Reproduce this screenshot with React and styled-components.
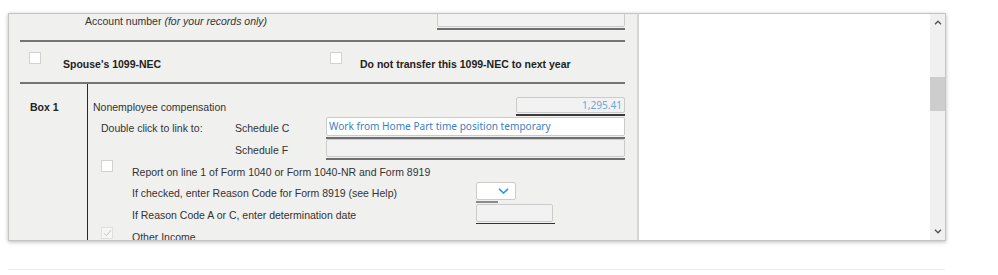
import React from 'react';
import styled, { createGlobalStyle } from 'styled-components';

const GlobalStyle = createGlobalStyle`
  html, body {
    margin: 0;
    padding: 0;
    background: #ffffff;
  }
  body {
    font-family: "Liberation Sans", Arial, sans-serif;
    font-size: 10.5px;
    color: #333333;
  }
`;

const Page = styled.div`
  padding: 13px 0 0 8px;
  width: 938px;
`;

const Window = styled.div`
  box-sizing: border-box;
  width: 938px;
  height: 228px;
  border: 1px solid #c4c4c4;
  box-shadow: 0 1px 4px rgba(0, 0, 0, 0.28);
  display: flex;
  background: #ffffff;
`;

const FormPane = styled.div`
  width: 628px;
  flex-shrink: 0;
  background: #f0f0ef;
  overflow: hidden;
`;

const FormContent = styled.div`
  margin-top: -6px;
  padding: 0 12px 0 11px;
`;

const Divider = styled.div`
  width: 2px;
  flex-shrink: 0;
  background: #d6d6d6;
`;

const SidePane = styled.div`
  flex: 1;
  background: #ffffff;
`;

const Scrollbar = styled.div`
  width: 15px;
  flex-shrink: 0;
  background: #f0f0f0;
  display: flex;
  flex-direction: column;
`;

const ArrowButton = styled.div`
  height: 17px;
  display: flex;
  align-items: center;
  justify-content: center;
`;

const Track = styled.div`
  flex: 1;
`;

const Thumb = styled.div`
  margin-top: 46px;
  height: 34px;
  background: #cdcdcd;
`;

const BottomRule = styled.div`
  margin-top: 28px;
  height: 1px;
  width: 937px;
  background: #ececec;
`;

/* form parts */

const Rule = styled.div`
  height: 2px;
  background: #747474;
`;

const AccountRow = styled.div`
  height: 32px;
  display: flex;
  align-items: flex-start;
`;

const Label = styled.div`
  line-height: 14px;
  padding-top: ${(p) => p.$top || 0}px;
  margin-left: ${(p) => p.$left || 0}px;
  white-space: nowrap;
  font-weight: ${(p) => (p.$bold ? 'bold' : 'normal')};
  color: ${(p) => (p.$bold ? '#222' : '#333')};
`;

const FieldGroup = styled.div`
  width: ${(p) => p.$width}px;
  margin-left: ${(p) => (p.$auto ? 'auto' : '0')};
  margin-top: ${(p) => p.$top || 0}px;
  display: flex;
  flex-direction: column;
  gap: 1px;
  flex-shrink: 0;
`;

const Input = styled.div`
  box-sizing: border-box;
  height: ${(p) => p.$height || 18}px;
  width: ${(p) => (p.$width ? `${p.$width}px` : '100%')};
  border: 1px solid #cbcbcb;
  border-radius: 2px;
  background: ${(p) => (p.$white ? '#ffffff' : '#f2f2f2')};
  font-family: "Noto Sans", "Open Sans", sans-serif;
  font-size: 10.1px;
  line-height: ${(p) => (p.$height || 18) - 2}px;
  color: ${(p) => p.$color || '#3b7fbf'};
  text-align: ${(p) => (p.$right ? 'right' : 'left')};
  padding: 0 2px;
  white-space: nowrap;
  overflow: hidden;
`;

const Underline = styled.div`
  height: ${(p) => p.$thick || 2}px;
  width: ${(p) => (p.$width ? `${p.$width}px` : '100%')};
  background: ${(p) => p.$color || '#6e6e6e'};
`;

const OptionsRow = styled.div`
  height: 40px;
  display: flex;
`;

const Option = styled.div`
  box-sizing: border-box;
  display: flex;
  align-items: flex-start;
  width: ${(p) => (p.$width ? `${p.$width}px` : 'auto')};
  padding-left: ${(p) => p.$pad || 0}px;
  flex-shrink: 0;
`;

const Checkbox = styled.div`
  box-sizing: border-box;
  width: 12px;
  height: 12px;
  margin-top: ${(p) => p.$top || 0}px;
  flex-shrink: 0;
  background: ${(p) => (p.$disabled ? '#f6f6f6' : '#ffffff')};
  border: 1px solid ${(p) => (p.$disabled ? '#e0e0e0' : '#d2d2d2')};
  display: flex;
  align-items: center;
  justify-content: center;
`;

const BoxSection = styled.div`
  display: grid;
  grid-template-columns: 67px 1fr;
`;

const BoxLabel = styled.div`
  padding: 16px 0 0 10px;
  line-height: 14px;
  font-weight: bold;
  color: #222;
`;

const BoxBody = styled.div`
  border-left: 1px solid #2a2a2a;
  padding-top: 13px;
  min-height: 200px;
`;

const CompRow = styled.div`
  display: flex;
  padding-left: 5px;
  margin-bottom: 1px;
`;

const LinkRow = styled.div`
  display: grid;
  grid-template-columns: 147px 91px 1fr;
`;

const CheckRow = styled.div`
  display: flex;
  align-items: flex-start;
  padding-left: 13px;
  height: ${(p) => p.$height}px;
`;

const FieldRow = styled.div`
  display: grid;
  grid-template-columns: 388px auto;
  height: ${(p) => p.$height}px;
`;

const Chevron = ({ up, color = '#505050' }) => (
  <svg width="8" height="5" viewBox="0 0 8 5">
    <path
      d={up ? 'M1 4.2 L4 1.2 L7 4.2' : 'M1 0.8 L4 3.8 L7 0.8'}
      fill="none"
      stroke={color}
      strokeWidth="1.3"
    />
  </svg>
);

const Select = styled.div`
  box-sizing: border-box;
  width: 40px;
  height: 18px;
  background: #ffffff;
  border: 1px solid #cbcbcb;
  border-radius: 2px;
  display: flex;
  align-items: center;
  justify-content: flex-end;
  padding-right: 6px;
`;

const App = () => {
  return (
    <>
      <GlobalStyle />
      <Page>
        <Window>
          <FormPane>
            <FormContent>
              <AccountRow>
                <Label $top={6} $left={65}>
                  Account number <i>(for your records only)</i>
                </Label>
                <FieldGroup $width={188} $auto>
                  <Input $height={19} />
                  <Underline />
                </FieldGroup>
              </AccountRow>
              <Rule />
              <OptionsRow>
                <Option $width={310} $pad={9}>
                  <Checkbox $top={10} />
                  <Label $bold $top={15} $left={22}>
                    Spouse's 1099-NEC
                  </Label>
                </Option>
                <Option>
                  <Checkbox $top={10} />
                  <Label $bold $top={15} $left={18}>
                    Do not transfer this 1099-NEC to next year
                  </Label>
                </Option>
              </OptionsRow>
              <Rule />
              <BoxSection>
                <BoxLabel>Box 1</BoxLabel>
                <BoxBody>
                  <CompRow>
                    <Label $top={3}>Nonemployee compensation</Label>
                    <FieldGroup $width={109} $auto>
                      <Input $height={16} $right $color="#6aa6d6">
                        1,295.41
                      </Input>
                      <Underline $color="#3a3a3a" />
                    </FieldGroup>
                  </CompRow>
                  <LinkRow>
                    <Label $top={4} $left={13}>
                      Double click to link to:
                    </Label>
                    <Label $top={4}>Schedule C</Label>
                    <FieldGroup $width={299}>
                      <Input $white $height={19}>
                        Work from Home Part time position temporary
                      </Input>
                      <Underline />
                    </FieldGroup>
                  </LinkRow>
                  <LinkRow>
                    <span />
                    <Label $top={4}>Schedule F</Label>
                    <FieldGroup $width={299}>
                      <Input $height={18} />
                      <Underline />
                    </FieldGroup>
                  </LinkRow>
                  <CheckRow $height={20}>
                    <Checkbox />
                    <Label $top={5} $left={19}>
                      Report on line 1 of Form 1040 or Form 1040-NR and Form 8919
                    </Label>
                  </CheckRow>
                  <FieldRow $height={23}>
                    <Label $top={6} $left={44}>
                      If checked, enter Reason Code for Form 8919 (see Help)
                    </Label>
                    <FieldGroup $width={40} $top={2}>
                      <Select>
                        <svg width="11" height="6" viewBox="0 0 11 6">
                          <path
                            d="M1 0.8 L5.5 5 L10 0.8"
                            fill="none"
                            stroke="#2a96f0"
                            strokeWidth="1.6"
                          />
                        </svg>
                      </Select>
                      <Underline $width={22} $color="#8a8a8a" />
                    </FieldGroup>
                  </FieldRow>
                  <FieldRow $height={22}>
                    <Label $top={5} $left={44}>
                      If Reason Code A or C, enter determination date
                    </Label>
                    <FieldGroup $width={79} $top={1}>
                      <Input $height={18} $width={77} />
                      <Underline $thick={1} $color="#333" />
                    </FieldGroup>
                  </FieldRow>
                  <CheckRow $height={20}>
                    <Checkbox $disabled $top={2}>
                      <svg width="9" height="8" viewBox="0 0 9 8">
                        <path
                          d="M1 4.2 L3.4 6.6 L8 1.2"
                          fill="none"
                          stroke="#c4c4c4"
                          strokeWidth="1"
                        />
                      </svg>
                    </Checkbox>
                    <Label $top={5} $left={19}>
                      Other Income
                    </Label>
                  </CheckRow>
                </BoxBody>
              </BoxSection>
            </FormContent>
          </FormPane>
          <Divider />
          <SidePane />
          <Scrollbar>
            <ArrowButton>
              <Chevron up />
            </ArrowButton>
            <Track>
              <Thumb />
            </Track>
            <ArrowButton>
              <Chevron />
            </ArrowButton>
          </Scrollbar>
        </Window>
        <BottomRule />
      </Page>
    </>
  );
};

export default App;
